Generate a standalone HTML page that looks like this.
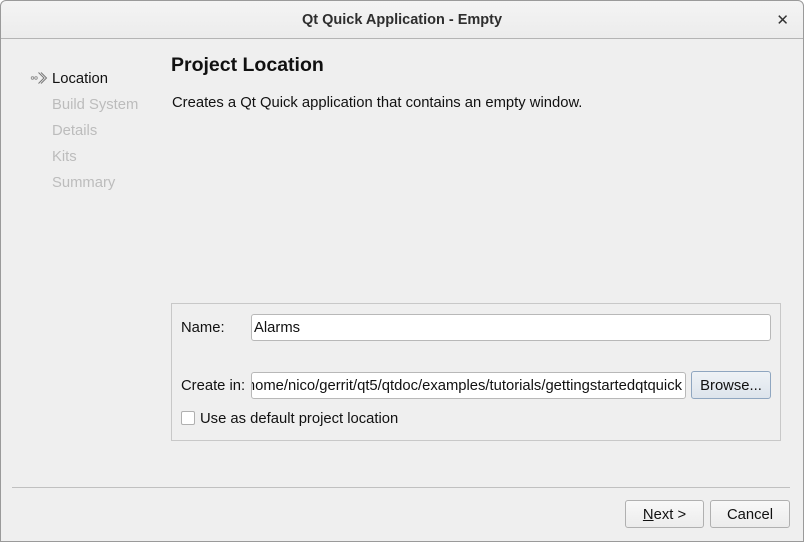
<!DOCTYPE html>
<html><head><meta charset="utf-8"><style>
*{box-sizing:border-box;margin:0;padding:0}
body{width:804px;height:542px;background:#fff;font-family:"Liberation Sans","DejaVu Sans",sans-serif;font-size:14.8px;color:#111;position:relative;overflow:hidden}
.win{position:absolute;left:0;top:0;width:804px;height:542px;background:#efefef;border-radius:6px 6px 0 0;overflow:hidden}
.frame{position:absolute;left:0;top:0;width:804px;height:542px;border:1px solid #9a9a9a;border-radius:6px 6px 0 0;pointer-events:none}
.title{position:absolute;left:0;top:0;width:804px;height:39px;background:linear-gradient(#f4f4f4,#ececec);border-bottom:1px solid #b4b4b4;text-align:center;line-height:41px;font-weight:bold;font-size:14.5px;color:#2e2e2e}
.x{position:absolute;right:15px;top:0;font-size:15px;font-weight:bold;color:#333}
.a{position:absolute;white-space:nowrap}
.g{color:#bcbcbc}
.box{position:absolute;left:171px;top:303px;width:610px;height:138px;border:1px solid #c8c8c8}
.inp{position:absolute;background:#fff;border:1px solid #b8b8b8;border-radius:3px;height:27px;line-height:26px;padding-left:2px;overflow:hidden;white-space:nowrap}
.btn{position:absolute;border:1px solid #b0b0b0;border-radius:3px;background:linear-gradient(#f8f8f8,#ececec);text-align:center;line-height:28px;height:28px}
</style></head><body><div class="win">
<div class="title">Qt Quick Application - Empty<span class="x">✕</span></div>
<svg class="a" style="left:30px;top:71px" width="18" height="14" viewBox="0 0 18 14"><circle cx="2.5" cy="7" r="1.3" fill="none" stroke="#888" stroke-width="0.8"/><circle cx="6" cy="7" r="1.3" fill="none" stroke="#888" stroke-width="0.8"/><path d="M8.5 1.5 L14 7 L8.5 12.5 M11 1.5 L16.5 7 L11 12.5" fill="none" stroke="#777" stroke-width="1"/></svg>
<div class="a" style="left:52px;top:71px">Location</div>
<div class="a g" style="left:52px;top:97px">Build System</div>
<div class="a g" style="left:52px;top:123px">Details</div>
<div class="a g" style="left:52px;top:149px">Kits</div>
<div class="a g" style="left:52px;top:175px">Summary</div>
<div class="a" style="left:171px;top:54px;font-size:19.5px;font-weight:bold">Project Location</div>
<div class="a" style="left:172px;top:95px">Creates a Qt Quick application that contains an empty window.</div>
<div class="box"></div>
<div class="a" style="left:181px;top:320px">Name:</div>
<div class="inp" style="left:251px;top:314px;width:520px">Alarms</div>
<div class="a" style="left:181px;top:378px">Create in:</div>
<div class="inp" style="left:251px;top:372px;width:435px;direction:rtl;text-align:left;padding-right:3px">‎/home/nico/gerrit/qt5/qtdoc/examples/tutorials/gettingstartedqtquick‎</div>
<div class="btn" style="left:691px;top:371px;width:80px;border-color:#8fa6c0;background:linear-gradient(#eef2f6,#dde4ec)">Browse...</div>
<div class="a" style="left:181px;top:411px;width:14px;height:14px;border:1px solid #b0b0b0;background:#fff;border-radius:2px"></div>
<div class="a" style="left:200px;top:411px">Use as default project location</div>
<div class="a" style="left:12px;top:487px;width:778px;height:1px;background:#c0c0c0"></div>
<div class="btn" style="left:625px;top:500px;width:79px"><u>N</u>ext &gt;</div>
<div class="btn" style="left:710px;top:500px;width:80px">Cancel</div>
</div><div class="frame"></div></body></html>
